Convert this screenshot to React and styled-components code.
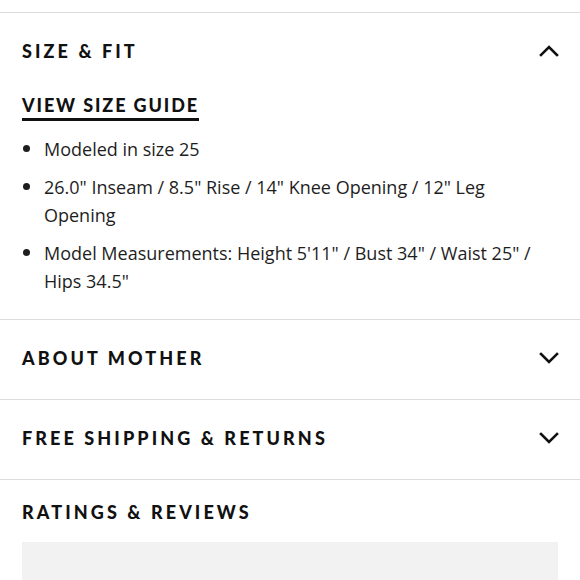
import React from "react";
import styled, { createGlobalStyle } from "styled-components";

const GlobalStyle = createGlobalStyle`
  html, body {
    margin: 0;
    padding: 0;
    background: #fff;
  }
  body {
    font-family: "Open Sans", "Liberation Sans", sans-serif;
    color: #1a1a1a;
  }
`;

const sections = [
  { title: "ABOUT MOTHER" },
  { title: "FREE SHIPPING & RETURNS" },
];

const fitNotes = [
  "Modeled in size 25",
  "26.0\" Inseam / 8.5\" Rise / 14\" Knee Opening / 12\" Leg Opening",
  "Model Measurements: Height 5'11\" / Bust 34\" / Waist 25\" / Hips 34.5\"",
];

function Chevron({ up }) {
  return (
    <ChevronIcon width="20" height="12" viewBox="0 0 20 12" $up={up}>
      <polyline
        points="2,2 10,10 18,2"
        fill="none"
        stroke="#111"
        strokeWidth="2.6"
        strokeLinecap="square"
      />
    </ChevronIcon>
  );
}

export default function App() {
  return (
    <>
      <GlobalStyle />
      <Page>
        <Section>
          <Header>
            <Title>SIZE &amp; FIT</Title>
            <Chevron up />
          </Header>
          <Content>
            <GuideLink href="#">VIEW SIZE GUIDE</GuideLink>
            <Notes>
              {fitNotes.map((n) => (
                <Note key={n}>{n}</Note>
              ))}
            </Notes>
          </Content>
        </Section>
        {sections.map((s) => (
          <Section key={s.title}>
            <Header>
              <Title>{s.title}</Title>
              <Chevron />
            </Header>
          </Section>
        ))}
        <Section>
          <ReviewsHeader>
            <Title>RATINGS &amp; REVIEWS</Title>
          </ReviewsHeader>
          <ReviewsBox />
        </Section>
      </Page>
    </>
  );
}

const Page = styled.div`
  width: 580px;
  height: 580px;
  overflow: hidden;
  padding-top: 12px;
  box-sizing: border-box;
`;

const Section = styled.section`
  border-top: 1px solid #dcdcdc;
`;

const Header = styled.div`
  height: 79px;
  padding: 0 22px 4px;
  display: flex;
  align-items: center;
  justify-content: space-between;
  box-sizing: border-box;
`;

const ReviewsHeader = styled(Header)`
  height: 62px;
  padding: 2px 22px 0;
`;

const Title = styled.h3`
  margin: 0;
  font-family: "Lato", "Liberation Sans", sans-serif;
  font-weight: 900;
  font-size: 18px;
  letter-spacing: 3.1px;
  color: #111;
`;

const ChevronIcon = styled.svg`
  display: block;
  margin-right: -1px;
  transform: ${(p) => (p.$up ? "rotate(180deg)" : "none")};
`;

const Content = styled.div`
  padding: 2px 22px 24px;
`;

const GuideLink = styled.a`
  display: inline-block;
  font-family: "Lato", "Liberation Sans", sans-serif;
  font-weight: 900;
  font-size: 18px;
  letter-spacing: 1.9px;
  line-height: 22px;
  color: #111;
  text-decoration: none;
  border-bottom: 3px solid #111;
  padding-bottom: 2px;
`;

const Notes = styled.ul`
  margin: 14px 0 0;
  padding: 0 0 0 22px;
  list-style: disc;
`;

const Note = styled.li`
  font-size: 18px;
  line-height: 28px;
  color: #1e1e1e;
  & + & {
    margin-top: 10px;
  }
  &::marker {
    font-size: 20px;
  }
`;

const ReviewsBox = styled.div`
  margin: 0 22px;
  height: 60px;
  background: #f2f2f2;
`;
